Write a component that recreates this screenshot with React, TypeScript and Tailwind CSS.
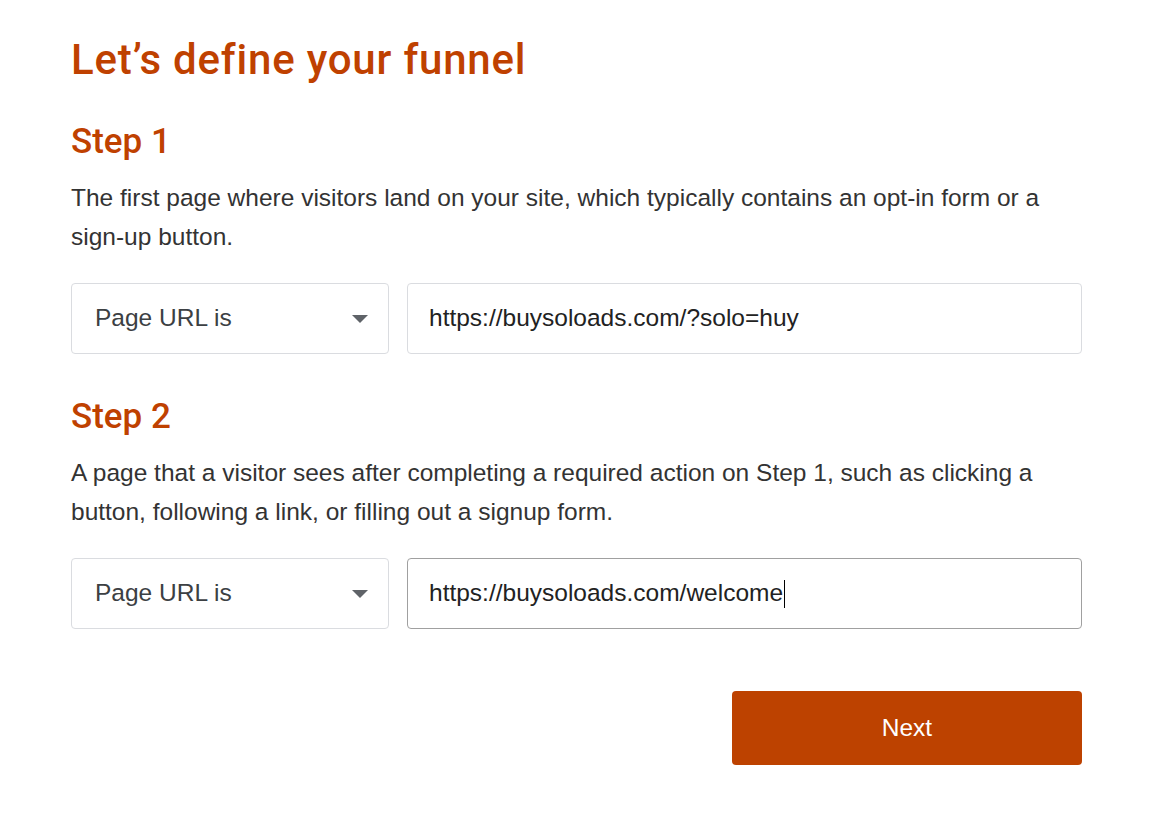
export default function App() {
  const heading = { fontFamily: "Roboto, 'Open Sans', sans-serif" };
  return (
    <div className="min-h-screen bg-white" style={{ fontFamily: "'Liberation Sans', Arial, sans-serif" }}>
      <div className="ml-[71px] w-[1011px] pt-[36px]">
        <h1 className="text-[42px] leading-[48px] font-medium tracking-[0.8px] text-[#bf4100]" style={heading}>
          Let’s define your funnel
        </h1>

        <StepBlock
          title="Step 1"
          text="The first page where visitors land on your site, which typically contains an opt-in form or a sign-up button."
          url="https://buysoloads.com/?solo=huy"
          className="mt-[38px]"
        />

        <StepBlock
          title="Step 2"
          text="A page that a visitor sees after completing a required action on Step 1, such as clicking a button, following a link, or filling out a signup form."
          url="https://buysoloads.com/welcome"
          focused
          className="mt-[43px]"
        />

        <div className="mt-[62px] flex justify-end">
          <button className="h-[74px] w-[350px] rounded-[4px] bg-[#bd4200] text-[24.5px] text-white">
            Next
          </button>
        </div>
      </div>
    </div>
  );
}

function StepBlock({
  title,
  text,
  url,
  focused = false,
  className = "",
}: {
  title: string;
  text: string;
  url: string;
  focused?: boolean;
  className?: string;
}) {
  return (
    <div className={className}>
      <h2 className="text-[35px] leading-[40px] font-medium text-[#bf4100]" style={{ fontFamily: "Roboto, 'Open Sans', sans-serif" }}>
        {title}
      </h2>
      <p className="mt-[16px] text-[24.5px] leading-[39px] text-[#333333]">{text}</p>
      <div className="mt-[27px] flex gap-[18px]">
        <div className="flex h-[71px] w-[318px] items-center justify-between rounded-[4px] border border-[#dadce0] pl-[23px] pr-[20px] text-[24.5px] text-[#3c4043]">
          <span>Page URL is</span>
          <svg width="16" height="8" viewBox="0 0 16 8">
            <path d="M0 0 L16 0 L8 8 Z" fill="#5f6368" />
          </svg>
        </div>
        <div
          className={
            focused
              ? "flex h-[71px] flex-1 items-center rounded-[4px] border border-[#a0a0a0] px-[21px] text-[24.5px] text-[#222222]"
              : "flex h-[71px] flex-1 items-center rounded-[4px] border border-[#dadce0] px-[21px] text-[24.5px] text-[#222222]"
          }
        >
          <span>{url}</span>
          {focused && <span className="ml-[1px] inline-block h-[28px] w-[1px] bg-black" />}
        </div>
      </div>
    </div>
  );
}
